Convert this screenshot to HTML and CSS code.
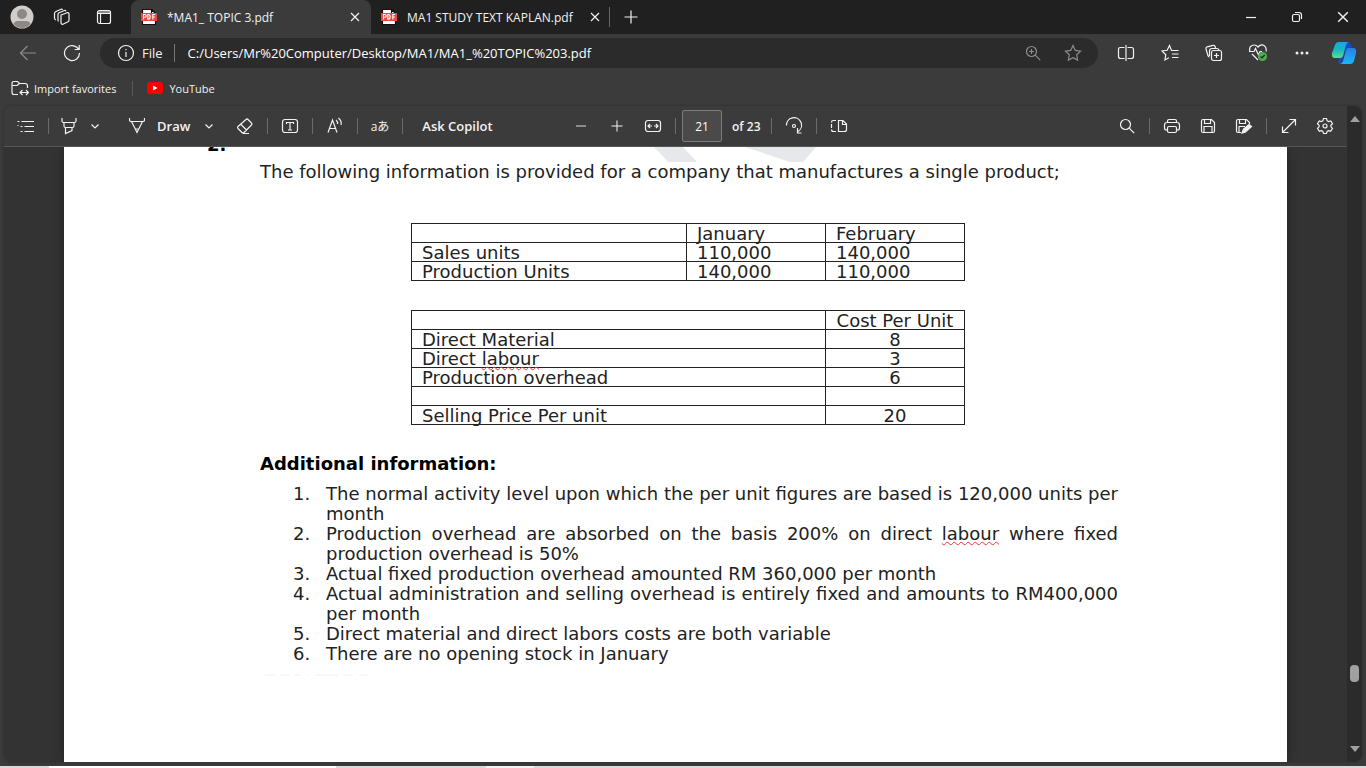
FILE: index.html
```html
<!DOCTYPE html>
<html lang="en">
<head>
<meta charset="utf-8">
<title>*MA1_ TOPIC 3.pdf</title>
<link rel="stylesheet" href="styles.css">
</head>
<body>
<svg class="defs" aria-hidden="true">
  <symbol id="pdf" viewBox="0 0 16 16"><path d="M1.500 .5h9L14.500 4.500v11h-13z" fill="#fff" stroke="#111"/><path d="M10.500 .5v4h4z" fill="#fff" stroke="#111"/><rect x="0" y="4" width="16" height="8" fill="#f4433c"/><path d="M2.500 10.500v-5h1.300a1.100 1.100 0 0 1 0 2.800H2.500M6.800 5.500v4.600h.8c2 0 2-4.600 0-4.600zM11.800 10.500v-5h2.400M11.800 8h2" fill="none" stroke="#fff" stroke-width="1.100"/></symbol>
  <symbol id="close" viewBox="0 0 10 10"><path d="M1 1l8 8M9 1L1 9"/></symbol>
  <symbol id="chevron" viewBox="0 0 8 8"><path d="M.5 2.500L4 6l3.500-3.500"/></symbol>
  <symbol id="plus" viewBox="0 0 14 14"><path d="M7 .5v13M.5 7h13"/></symbol>
</svg>

<header class="titlebar">
  <button class="avatar" aria-label="Profile"><svg width="24" height="24" viewBox="0 0 24 24" class="solid"><defs><clipPath id="face"><circle cx="12" cy="12" r="11"/></clipPath></defs><circle cx="12" cy="12" r="11.500" fill="#d0cdca"/><g clip-path="url(#face)" fill="#8d8884"><circle cx="12" cy="9" r="5"/><path d="M3 24v-4q1-4 5-4h8q4 0 5 4v4z"/></g></svg></button>
  <button class="cell" aria-label="Workspaces"><svg width="18" height="18" viewBox="0 0 18 18"><path d="M8 7l6-2.300q2-.5 2 1.500v6q0 1-1 1.500l-5 2.500q-2 .5-2-1.500zM5.500 13.500Q5 13 5 12V6.500q0-1.300 1-1.700l5.500-2.300q1-.3 1.500.8M3 12q-1.500-.5-1.500-2V5.500q0-1.200 1-1.700L8 1.200q1-.3 1.700.6"/></svg></button>
  <button class="cell" aria-label="Tab actions menu"><svg width="16" height="16" viewBox="0 0 16 16"><rect x="1.500" y="1.500" width="13" height="13" rx="2"/><path d="M1.500 3h13M1.500 4.500h13M4.500 4.500v10"/></svg></button>
  <nav class="tabs" aria-label="Tabs">
    <div class="tab active"><svg class="solid" width="16" height="16"><use href="#pdf"/></svg><span>*MA1_ TOPIC 3.pdf</span><button aria-label="Close tab"><svg width="10" height="10"><use href="#close"/></svg></button></div>
    <div class="tab"><svg class="solid" width="16" height="16"><use href="#pdf"/></svg><span>MA1 STUDY TEXT KAPLAN.pdf</span><button aria-label="Close tab"><svg width="10" height="10"><use href="#close"/></svg></button></div>
  </nav>
  <button class="new-tab" aria-label="New tab"><svg width="14" height="14"><use href="#plus"/></svg></button>
  <div class="window-controls">
    <button aria-label="Minimize"><svg width="12" height="12" viewBox="0 0 12 12"><path d="M1 6.500h10"/></svg></button>
    <button aria-label="Restore"><svg width="12" height="12" viewBox="0 0 12 12"><rect x="1.500" y="3.500" width="7" height="7" rx="1.500"/><path d="M4 1.500h4q2.500 0 2.500 2.500v4"/></svg></button>
    <button aria-label="Close"><svg width="12" height="12" viewBox="0 0 10 10"><use href="#close"/></svg></button>
  </div>
</header>

<div class="navbar">
  <button class="dim" aria-label="Back"><svg width="18" height="16" viewBox="0 0 18 16"><path d="M17 8H1.500M8.500 1l-7 7 7 7"/></svg></button>
  <button aria-label="Refresh"><svg width="18" height="18" viewBox="0 0 18 18"><path d="M16.500 9A7.500 7.500 0 1 1 13.800 3.300L16 5.500M16.200 1v4.500h-4.500"/></svg></button>
  <div class="address">
    <svg width="18" height="18" viewBox="0 0 18 18"><circle cx="9" cy="9" r="7.500"/><path d="M9 8v5M9 5v1.300"/></svg>
    <span class="scheme">File</span>
    <input aria-label="Address" value="C:/Users/Mr%20Computer/Desktop/MA1/MA1_%20TOPIC%203.pdf">
    <button class="dim" aria-label="Zoom"><svg width="16" height="16" viewBox="0 0 16 16"><circle cx="6.500" cy="6.500" r="5"/><path d="M10.200 10.200l5 5M6.500 4v5M4 6.500h5"/></svg></button>
    <button class="dim" aria-label="Add to favorites"><svg width="18" height="18" viewBox="0 0 18 18"><path d="M9 1.500l2.300 4.900 5.200.7-3.800 3.700.9 5.300L9 13.600l-4.600 2.500.9-5.300L1.500 7.100l5.200-.7z"/></svg></button>
  </div>
  <div class="nav-actions">
    <button aria-label="Split screen"><svg width="18" height="18" viewBox="0 0 18 18"><path d="M7.500 3.500H3.500q-2 0-2 2v7q0 2 2 2h4M10.500 3.500h4q2 0 2 2v7q0 2-2 2h-4M9 1v16"/></svg></button>
    <button aria-label="Favorites"><svg width="18" height="18" viewBox="0 0 18 18"><path d="M13 6.500h-2.500L8.500 1.500l-2.300 4.800L1 7l3.800 3.700-.9 5.300 4-2.200M10.500 6.500h7M11 10h6.500M11 13.500h6.500"/></svg></button>
    <button aria-label="Collections"><svg width="18" height="18" viewBox="0 0 18 18"><rect x="6.500" y="6.500" width="10" height="10" rx="2"/><path d="M11.500 9v5M9 11.500h5M4.500 12.800q-1 .2-1.500-1L1 5q-.3-1.600 1.200-2.200L8 1.300q1.500-.3 2 1l.6 1.900M4.500 12V7q0-2.500 2.500-2.500h5q1.500 0 2 1.500"/></svg></button>
    <button aria-label="Browser essentials"><svg width="20" height="20" viewBox="0 0 20 20"><path d="M2 8.500Q.5 4 4 2.500t6 1.500q3-3.500 6-1.500t2 6M1 8.500h5l1.500-3 3 6.500L12 8.500h2M4 11l6 6"/><circle class="solid" cx="14.500" cy="13.500" r="4.500" fill="#4caf50"/><path d="M12.500 13.500l1.500 1.500 2.700-3" stroke="#222"/></svg></button>
    <button aria-label="Settings and more"><svg class="solid" width="14" height="4" viewBox="0 0 14 4"><g fill="#eee"><circle cx="2" cy="2" r="1.500"/><circle cx="7" cy="2" r="1.500"/><circle cx="12" cy="2" r="1.500"/></g></svg></button>
    <button aria-label="Copilot"><svg class="solid" width="26" height="26" viewBox="0 0 26 26"><defs><linearGradient id="ca" x2="0" y2="1"><stop stop-color="#12a7e8"/><stop offset=".5" stop-color="#16b9c0"/><stop offset="1" stop-color="#62dc92"/></linearGradient><linearGradient id="cb" x2="0" y2="1"><stop stop-color="#2a7de8"/><stop offset="1" stop-color="#18b8f8"/></linearGradient></defs><path d="M13 2h4q2 0 2.700 2L21 8h-4q-2 0-3 3l-3 10q-1 3-4 2.500L8 18z" fill="#1748c5"/><path d="M8 2h10q-2 0-3 3l-3 11q-.6 2-3 2H4q-4 0-3-5L4 5q1-3 4-3z" fill="url(#ca)"/><path d="M17 8h5q4 0 3 5l-2 8q-1 3-4 3H8q3 0 4-3l3-11q.6-2 2-2z" fill="url(#cb)"/></svg></button>
  </div>
</div>

<nav class="bookmarks" aria-label="Favorites bar">
  <a href="#"><svg width="18" height="16" viewBox="0 0 18 16"><path d="M7 14.500H3q-2 0-2-2v-9q0-2 2-2h3.500l2 2H14q2.500 0 2.500 2.500v2M1 5.500h5l2.500-2M10 12.500h7M11.500 10l-2.500 2.500 2.500 2.500M15 10l2.500 2.500L15 15"/></svg>Import favorites</a>
  <a href="#"><svg class="solid" width="16" height="12" viewBox="0 0 16 12"><rect width="16" height="12" rx="3" fill="#f00"/><path d="M6 3.500v5L10.500 6z" fill="#fff"/></svg>YouTube</a>
</nav>

<main class="viewer">
  <div class="reader">
    <div class="toolbar" role="toolbar" aria-label="PDF tools">
      <div class="group">
        <button class="cell" aria-label="Contents"><svg width="18" height="14" viewBox="0 0 18 14"><path d="M4.500 2.500H17M7.500 7.500H17M7.500 12.500H17M.5 2.500h2M3.500 7.500h2M3.500 12.500h2M.5 6.500h1"/></svg></button>
        <i class="sep"></i>
        <button class="highlight" aria-label="Highlight"><svg width="16" height="18" viewBox="0 0 16 18"><path d="M1 1v3q0 1.500 1.500 1.500h11Q15 5.500 15 4V1M3 5.500V9q0 1.500 1.500 1.500h7Q13 10.500 13 9V5.500M4.500 10.500v6l6.500-3v-3"/></svg></button>
        <button class="drop" aria-label="Highlight options"><svg width="8" height="8"><use href="#chevron"/></svg></button>
      </div>
      <div class="group draw">
        <button class="labelled"><svg width="16" height="18" viewBox="0 0 16 18"><path d="M.5 1v2q0 1.500 1.500 1.500h12q1.500 0 1.500-1.500V1M2.500 4.500L8 15.500l5.500-11M6 12h4"/></svg><span>Draw</span></button>
        <button class="drop" aria-label="Draw options"><svg width="8" height="8"><use href="#chevron"/></svg></button>
      </div>
      <div class="group">
        <button class="cell" aria-label="Erase"><svg width="18" height="18" viewBox="0 0 18 18"><path d="M10 2.500q1-1 2 0L15.500 6q1 1 0 2L8 15.500q-1 1-2 0L2 11.500q-1-1 0-2zM5 7.500l5.500 5.500M7 16.500h6"/></svg></button>
        <i class="sep"></i>
        <button class="cell" aria-label="Add text"><svg width="18" height="16" viewBox="0 0 18 16"><rect x="1.500" y="1.500" width="15" height="13" rx="2.500"/><path d="M5.500 6V4.500h7V6M9 4.500v7.500M7 12h4"/></svg></button>
        <i class="sep"></i>
        <button class="cell" aria-label="Read aloud"><svg width="18" height="18" viewBox="0 0 18 18"><path d="M2 15.500L6.500 3 11 15.500M3.500 11.500h6M10 3q2 1.500 1.500 4M12.500 1q3.500 3 2.500 7"/></svg></button>
        <i class="sep"></i>
        <button class="cell translate" aria-label="Translate">aあ</button>
        <i class="sep"></i>
        <button class="ask">Ask Copilot</button>
      </div>
      <div class="group zooming">
        <button class="cell dim" aria-label="Zoom out"><svg width="12" height="12" viewBox="0 0 12 12"><path d="M1 6h10" stroke-width="2"/></svg></button>
        <button class="cell" aria-label="Zoom in"><svg width="12" height="12" viewBox="0 0 14 14"><use href="#plus"/></svg></button>
        <button class="cell" aria-label="Fit to width"><svg width="18" height="14" viewBox="0 0 18 14"><rect x="1.500" y="1.500" width="15" height="11" rx="2.500"/><path d="M4 7h4M10 7h4M6 5L4 7l2 2M12 5l2 2-2 2"/></svg></button>
        <i class="sep"></i>
        <input class="page-number" aria-label="Page number" value="21">
        <span class="page-count">of 23</span>
        <i class="sep"></i>
        <button class="cell" aria-label="Rotate"><svg width="18" height="18" viewBox="0 0 18 18"><path d="M1.500 8.500A7.500 7.500 0 1 1 13 14.500M12.500 11v5h4"/><circle cx="9" cy="9" r="1.500"/></svg></button>
        <i class="sep"></i>
        <button class="cell" aria-label="Page view"><svg width="18" height="14" viewBox="0 0 18 14"><path d="M6 1.500H3.500q-2 0-2 2M1.500 5v4M1.500 10.500q0 2 2 2H6M8.500 1.500H13L16.500 5v5.500q0 2-2 2h-6zM12.500 1.500v4h4"/></svg></button>
      </div>
      <div class="group end">
        <button class="cell" aria-label="Find"><svg width="16" height="16" viewBox="0 0 16 16"><circle cx="6.500" cy="6.500" r="5"/><path d="M10.200 10.200l5 5"/></svg></button>
        <i class="sep"></i>
        <button class="cell" aria-label="Print"><svg width="18" height="16" viewBox="0 0 18 16"><path d="M4.500 4.500V3q0-1.500 1.500-1.500h6q1.500 0 1.500 1.500v1.500M4.500 12H3.500q-2 0-2-2V7q0-2.500 2.500-2.500h10q2.500 0 2.500 2.500v3q0 2-2 2h-1"/><rect x="4.500" y="8.500" width="9" height="6" rx="1.500"/></svg></button>
        <button class="cell" aria-label="Save"><svg width="16" height="16" viewBox="0 0 16 16"><path d="M3 1.500h8.500l3 3V13q0 1.500-1.500 1.500H3Q1.500 14.500 1.500 13V3Q1.500 1.500 3 1.500zM4.500 1.500v4h6v-4M4 14.500v-6h8v6"/></svg></button>
        <button class="cell" aria-label="Save as"><svg width="18" height="16" viewBox="0 0 18 16"><path d="M14.500 6V4.500l-3-3H3Q1.500 1.500 1.500 3v10q0 1.500 1.500 1.500h3M4.500 1.500v4h6v-4M4 14.500v-6h6"/><path d="M7 15l1.500-4L14 6.500l2.500 2-6 5.500z" fill="#f2f2f2"/></svg></button>
        <i class="sep"></i>
        <button class="cell" aria-label="Full screen"><svg width="16" height="16" viewBox="0 0 16 16"><path d="M1.500 14.500l13-13M8.500 1.500h6v6M1.500 8.500v6h6"/></svg></button>
        <button class="cell" aria-label="Settings"><svg width="18" height="18" viewBox="0 0 18 18"><path d="M7.500 1.500h3l.6 2.200 1.400.8 2.200-.6 1.800 2.800-1.600 1.600v1.500l1.600 1.600-1.800 2.800-2.200-.6-1.400.8-.6 2.100h-3l-.6-2.100-1.400-.8-2.200.6-1.800-2.800 1.600-1.600V8.300L1.500 6.700l1.800-2.800 2.200.6 1.400-.8z"/><circle cx="9" cy="9" r="2"/></svg></button>
      </div>
    </div>

    <div class="canvas">
      <article class="page">
        <svg class="watermark solid" width="170" height="15" viewBox="0 0 170 15" aria-hidden="true"><path d="M0 0h29l14 15H14zM91 0h71l-13 15h-13z" fill="#e7e8ec"/></svg>
        <div class="question">2.</div>
        <p class="intro">The following information is provided for a company that manufactures a single product;</p>
        <table class="units">
          <colgroup><col class="half"><col><col></colgroup>
          <tr><td></td><td>January</td><td>February</td></tr>
          <tr><td>Sales units</td><td>110,000</td><td>140,000</td></tr>
          <tr><td>Production Units</td><td>140,000</td><td>110,000</td></tr>
        </table>
        <table class="costs">
          <colgroup><col><col class="quarter"></colgroup>
          <tr><td></td><td>Cost Per Unit</td></tr>
          <tr><td>Direct Material</td><td>8</td></tr>
          <tr><td>Direct <span class="typo">labour</span></td><td>3</td></tr>
          <tr><td>Production overhead</td><td>6</td></tr>
          <tr><td></td><td></td></tr>
          <tr><td>Selling Price Per unit</td><td>20</td></tr>
        </table>
        <h2>Additional information:</h2>
        <ol>
          <li>The normal activity level upon which the per unit figures are based is 120,000 units per month</li>
          <li>Production overhead are absorbed on the basis 200% on direct <span class="typo">labour</span> where fixed production overhead is 50%</li>
          <li>Actual fixed production overhead amounted RM 360,000 per month</li>
          <li>Actual administration and selling overhead is entirely fixed and amounts to RM400,000 per month</li>
          <li>Direct material and direct labors costs are both variable</li>
          <li>There are no opening stock in January</li>
        </ol>
        <svg class="trace solid" width="104" height="2" viewBox="0 0 104 2" aria-hidden="true"><path d="M0 1h10M15 1h9M29 1h7M42 1h2M50 1h24M78 1h10M94 1h10" stroke="#f1f1f1"/></svg>
      </article>
    </div>
  </div>
  <div class="scrollbar" aria-hidden="true">
    <svg class="solid" width="10" height="6" viewBox="0 0 10 6"><path d="M5 0l5 6H0z" fill="#a0a0a0"/></svg>
    <i class="thumb"></i>
    <svg class="solid" width="10" height="6" viewBox="0 0 10 6"><path d="M5 6l5-6H0z" fill="#a0a0a0"/></svg>
  </div>
</main>
<footer class="desktop-edge"><i class="edge-window"></i><i class="edge-button"></i></footer>
</body>
</html>
```

FILE: styles.css
```css
* { box-sizing: border-box; }
body {
  margin: 0;
  height: 100vh;
  display: flex;
  flex-direction: column;
  overflow: hidden;
  background: #3b3b3b;
  color: #f2f2f2;
  font: 12px "Open Sans", "Noto Sans", sans-serif;
}
.defs { position: absolute; width: 0; height: 0; }
svg { flex: none; fill: none; stroke: #f2f2f2; stroke-width: 1.2; }
.solid { stroke: none; }
button {
  display: flex;
  align-items: center;
  justify-content: center;
  padding: 0;
  border: 0;
  background: none;
  color: inherit;
  font: inherit;
}
.dim svg { stroke: #8c8c8c; }

.titlebar { display: flex; flex: none; height: 34px; background: #202020; }
.titlebar button { height: 34px; }
.avatar { width: 41px; padding-left: 3px; }
.titlebar .cell { width: 42px; }
.tabs { display: flex; margin-left: 6px; }
.tab { display: flex; align-items: center; width: 240px; padding: 0 10px; gap: 10px; }
.tab span { flex: 1; white-space: nowrap; }
.tab button { width: 12px; }
.tab.active { background: #3b3b3b; border-radius: 8px 8px 0 0; }
.new-tab { justify-content: flex-start; width: 42px; margin-left: -2px; }
.new-tab::before { content: ""; width: 1px; height: 20px; margin-right: 14px; background: #666; }
.window-controls { display: flex; margin-left: auto; }
.window-controls button { width: 46px; }

.navbar { display: flex; flex: none; align-items: center; height: 38px; }
.navbar > button { width: 44px; margin-left: 6px; }
.navbar > button + button { margin: 0 6px 0 0; }
.address {
  display: flex;
  flex: 1;
  align-items: center;
  height: 30px;
  padding-left: 17px;
  padding-right: 5px;
  border-radius: 15px;
  background: #2b2b2b;
  font-size: 13px;
}
.scheme { margin-left: 7px; padding-right: 11px; border-right: 1px solid #777; }
.address input {
  flex: 1;
  min-width: 0;
  padding: 0 0 0 13px;
  border: 0;
  background: none;
  color: #fff;
  font: inherit;
}
.address button { width: 40px; }
.nav-actions { display: flex; margin-left: 6px; }
.nav-actions button { width: 44px; height: 30px; }
.nav-actions button:last-child { width: 40px; margin-right: 2px; }

.bookmarks { display: flex; flex: none; align-items: center; height: 34px; padding: 0 0 2px 11px; font-size: 11px; }
.bookmarks a { display: flex; align-items: center; gap: 5px; color: inherit; text-decoration: none; }
.bookmarks a + a { margin-left: 16px; padding-left: 14px; border-left: 1px solid #5a5a5a; gap: 6px; }

.viewer {
  display: flex;
  flex: 1;
  min-height: 0;
  margin: 0 4px 4px;
  border-radius: 8px;
  overflow: hidden;
  box-shadow: 0 0 3px #2c2c2c;
}
.reader { display: flex; flex-direction: column; flex: 1; min-width: 0; }
.toolbar {
  display: flex;
  flex: none;
  align-items: center;
  height: 41px;
  padding: 0 4px;
  background: #3b3b3b;
  border-bottom: 1px solid #555;
}
.group { display: flex; align-items: center; }
.cell { width: 36px; height: 32px; }
.highlight { width: 32px; height: 32px; }
.sep { width: 1px; height: 16px; margin: 0 4px; background: #6b6b6b; }
.drop { width: 16px; height: 32px; margin-left: 2px; }
.draw { margin: 0 10px 0 16px; }
.labelled { width: 80px; justify-content: flex-start; padding-left: 10px; gap: 12px; }
.labelled, .ask { font-size: 13px; font-weight: 600; }
.translate { font: 12px "Open Sans", "Noto Sans CJK JP", sans-serif; }
.ask { width: 95px; padding-left: 6px; }
.zooming { margin-left: 61px; }
.page-number {
  width: 40px;
  height: 32px;
  margin-left: 2px;
  padding: 0;
  border: 1px solid #7c7c7c;
  border-radius: 2px;
  background: #4a4a4a;
  color: #fff;
  font: inherit;
  text-align: center;
}
.page-count { width: 45px; padding-left: 10px; font-weight: 600; white-space: nowrap; }
.end { margin-left: auto; }

.canvas { display: flex; flex: 1; min-height: 0; padding: 0 60px; background: #333; overflow: hidden; }
.page {
  position: relative;
  flex: 1;
  padding: 0 169px 0 196px;
  background: #fff;
  box-shadow: 0 0 8px #222;
  color: #222;
  font: 18px/20px "DejaVu Sans", sans-serif;
}
.watermark { position: absolute; top: 0; left: 590px; }
.question {
  display: flex;
  align-items: flex-end;
  height: 5px;
  margin-left: -53px;
  overflow: hidden;
  color: #000;
  font-weight: 700;
  line-height: 15px;
}
.intro { margin: 10px 0 41px; white-space: nowrap; }
table { width: 554px; margin: 0 0 29px 151px; border-collapse: collapse; table-layout: fixed; }
.half { width: 275px; }
.quarter { width: 139px; }
td { height: 19px; padding: 2px 10px 0; border: 1px solid #222; line-height: 16px; white-space: nowrap; }
.costs td + td { padding: 2px 0 0; text-align: center; }
.typo { text-decoration: underline wavy #e33 1px; text-underline-offset: 1px; }
h2 { margin: 0 0 10px; font-size: 18px; line-height: 20px; color: #000; }
ol { margin: 0; padding-left: 66px; list-style: none; text-align: justify; counter-reset: item; }
li { counter-increment: item; }
li::before { content: counter(item) "."; display: inline-block; width: 33px; margin-left: -33px; }
.trace { display: block; margin: 10px 0 0 5px; }

.scrollbar {
  display: flex;
  flex-direction: column;
  align-items: center;
  width: 15px;
  padding: 10px 0;
  background: #2b2b2b;
}
.thumb { width: 9px; height: 17px; margin: auto 0 64px; border-radius: 4px; background: #a0a0a0; }

.desktop-edge { display: flex; flex: none; height: 2px; background: #d9d9d9; }
.edge-window { width: 21%; margin-left: 49px; background: #fff; }
.edge-button { width: 48px; margin-left: 150px; background: #f3f3f3; }
```
